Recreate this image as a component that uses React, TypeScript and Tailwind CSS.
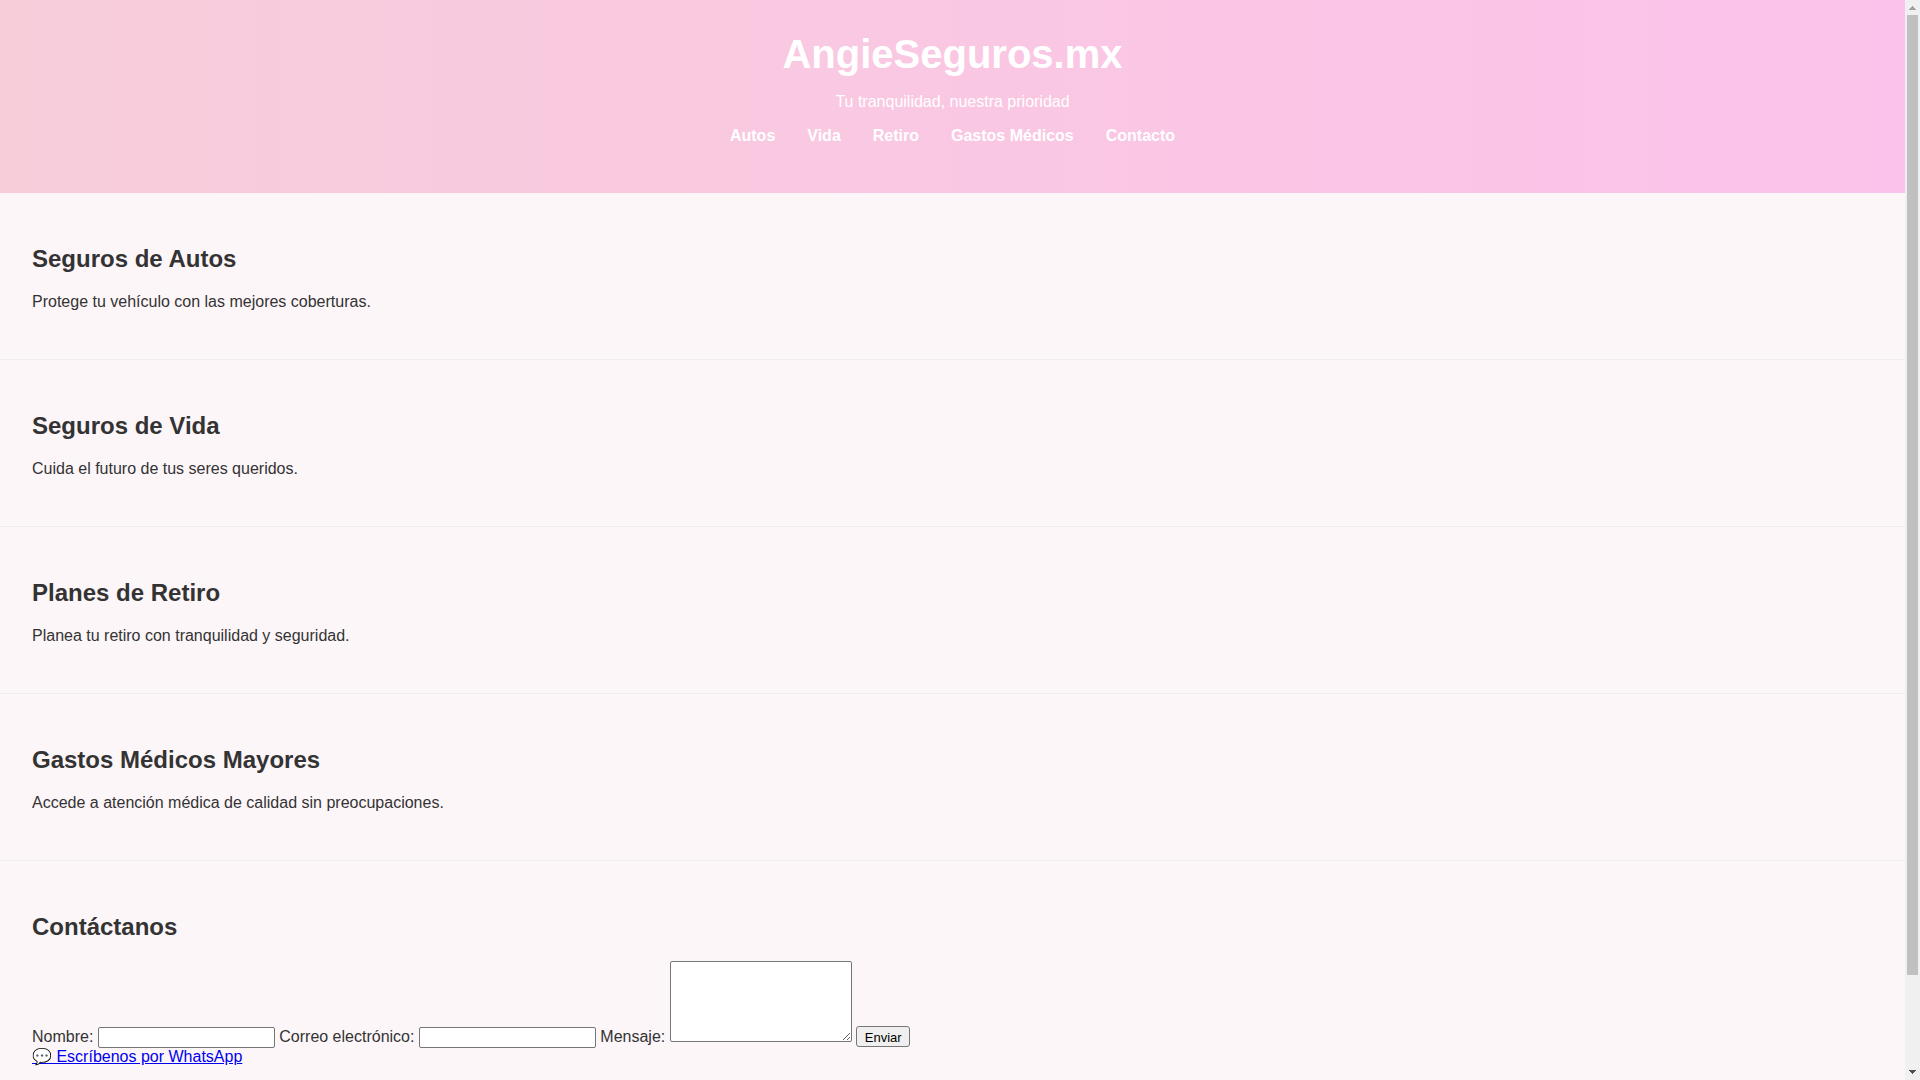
interface NavLink {
  label: string;
  target: string;
}

interface InsuranceSection {
  id: string;
  title: string;
  text: string;
}

const navLinks: NavLink[] = [
  { label: "Autos", target: "#autos" },
  { label: "Vida", target: "#vida" },
  { label: "Retiro", target: "#retiro" },
  { label: "Gastos Médicos", target: "#gastos" },
  { label: "Contacto", target: "#contacto" },
];

const sections: InsuranceSection[] = [
  {
    id: "autos",
    title: "Seguros de Autos",
    text: "Protege tu vehículo con las mejores coberturas.",
  },
  {
    id: "vida",
    title: "Seguros de Vida",
    text: "Cuida el futuro de tus seres queridos.",
  },
  {
    id: "retiro",
    title: "Planes de Retiro",
    text: "Planea tu retiro con tranquilidad y seguridad.",
  },
  {
    id: "gastos",
    title: "Gastos Médicos Mayores",
    text: "Accede a atención médica de calidad sin preocupaciones.",
  },
];

const fieldClass =
  "rounded-[2px] border border-[#767676] bg-white px-0.5 text-[13px] text-black";

const Header = () => (
  <header className="bg-[linear-gradient(90deg,#f8cdda,#fbc2eb)] px-8 pt-8 pb-12 text-center text-white">
    <h1 className="text-[40px] leading-[45px] font-bold">AngieSeguros.mx</h1>
    <p className="mt-4">Tu tranquilidad, nuestra prioridad</p>
    <nav className="mt-4">
      <ul className="flex justify-center gap-8">
        {navLinks.map((link) => (
          <li key={link.target}>
            <a href={link.target} className="font-bold">
              {link.label}
            </a>
          </li>
        ))}
      </ul>
    </nav>
  </header>
);

const SectionTitle = ({ children }: { children: string }) => (
  <h2 className="my-5 text-2xl leading-7 font-bold">{children}</h2>
);

const ContactForm = () => (
  <form>
    <label htmlFor="nombre">Nombre:</label>{" "}
    <input
      id="nombre"
      type="text"
      className={`${fieldClass} h-[21px] w-[177px]`}
    />{" "}
    <label htmlFor="correo">Correo electrónico:</label>{" "}
    <input
      id="correo"
      type="email"
      className={`${fieldClass} h-[21px] w-[177px]`}
    />{" "}
    <label htmlFor="mensaje">Mensaje:</label>{" "}
    <textarea
      id="mensaje"
      rows={5}
      className={`${fieldClass} inline-block h-[81px] w-[182px] resize align-baseline`}
    />{" "}
    <button
      type="submit"
      className="h-[21px] w-[54px] rounded-[3px] border border-[#767676] bg-[#efefef] pt-0.5 text-[13px] text-black"
    >
      Enviar
    </button>
  </form>
);

// Classic scrollbar: arrow buttons at both ends and a square thumb
const Scrollbar = () => (
  <div
    aria-hidden="true"
    className="flex w-[15px] shrink-0 flex-col items-center bg-[#f0f0f0]"
  >
    <svg width="15" height="15" shapeRendering="crispEdges">
      <path d="M7 6h1v1h1v1h1v1h1v1H4V9h1V8h1V7h1z" fill="#a0a0a0" />
    </svg>
    <div className="flex min-h-0 w-[11px] flex-1 flex-col">
      <div className="h-[91.4%] bg-[#c0c0c0]" />
    </div>
    <svg width="15" height="15" shapeRendering="crispEdges">
      <path d="M4 5h7v1h-1v1H9v1H8v1H7V8H6V7H5V6H4z" fill="#505050" />
    </svg>
  </div>
);

const App = () => {
  return (
    <div className="flex h-screen bg-[#fdf6f9] font-['Liberation_Sans',Arial,sans-serif] text-base leading-[18px] text-[#333]">
      <div className="min-w-0 flex-1 overflow-hidden">
        <Header />
        <main>
          {sections.map((section) => (
            <section
              key={section.id}
              id={section.id}
              className="flow-root border-b border-[#eee] px-8 pt-8 pb-12"
            >
              <SectionTitle>{section.title}</SectionTitle>
              <p>{section.text}</p>
            </section>
          ))}
          <section id="contacto" className="flow-root px-8 py-8">
            <SectionTitle>Contáctanos</SectionTitle>
            <ContactForm />
            <a href="#whatsapp" className="text-[#0000ee] underline">
              💬 Escríbenos por WhatsApp
            </a>
          </section>
        </main>
      </div>
      <Scrollbar />
    </div>
  );
};

export default App;
